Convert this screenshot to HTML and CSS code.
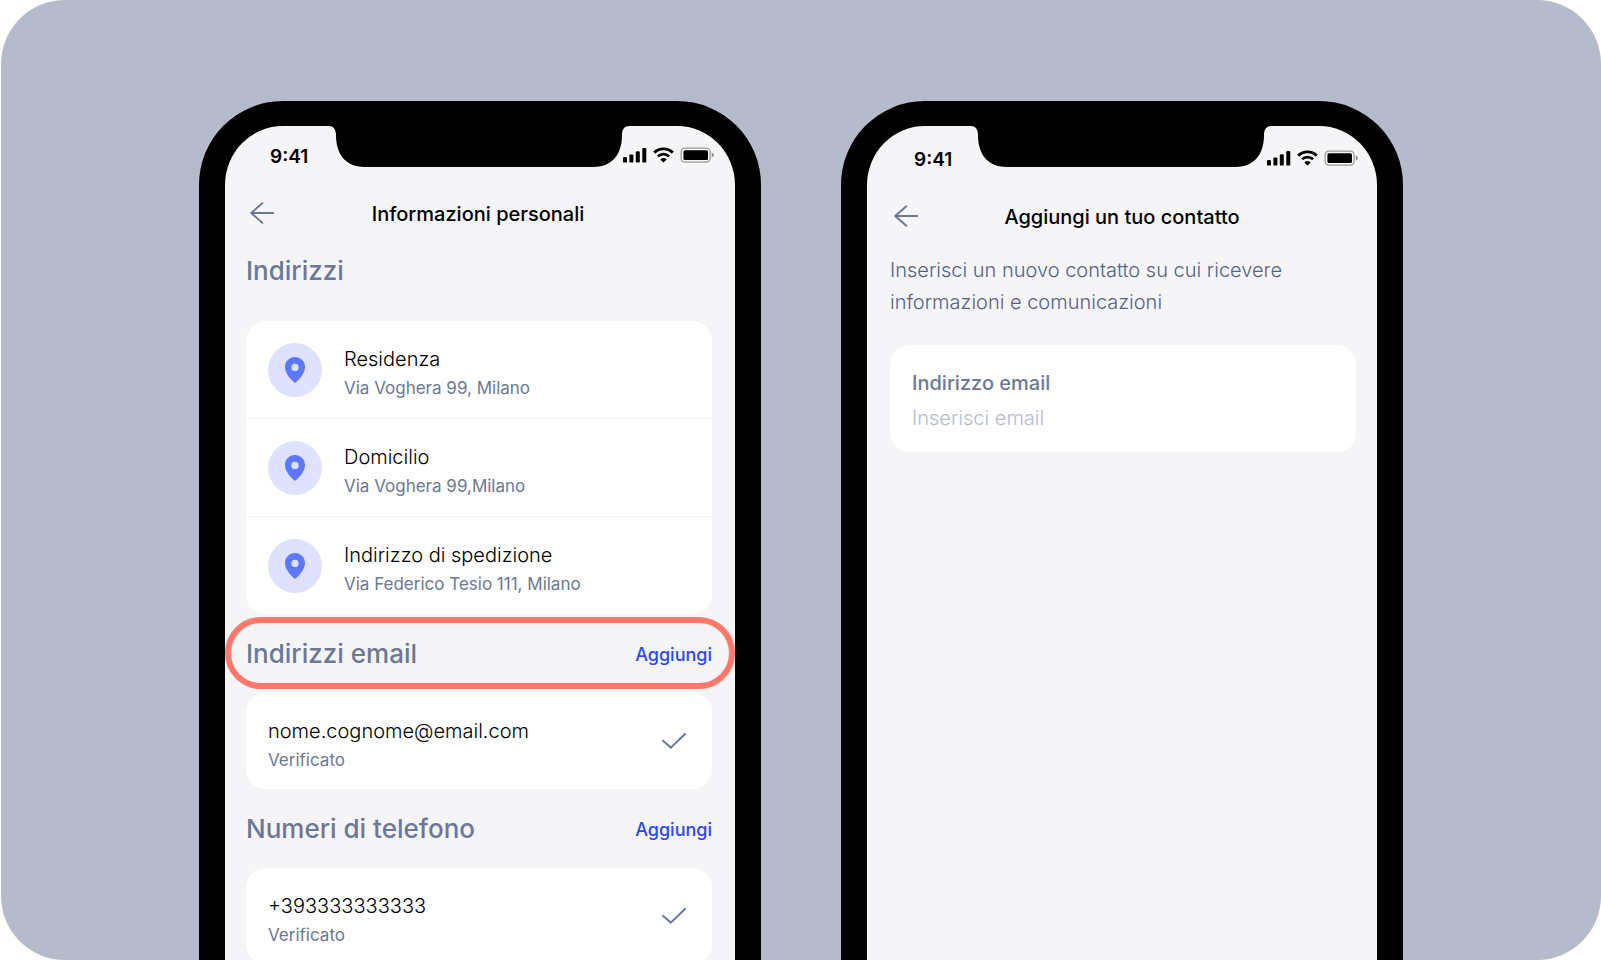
FILE: index.html
```html
<!DOCTYPE html>
<html lang="it">

<head>
    <meta charset="UTF-8">
    <meta name="viewport" content="width=device-width, initial-scale=1.0">
    <title>Informazioni personali</title>
    <link rel="stylesheet" href="styles.css">
</head>

<body>
    <!-- shared icons -->
    <svg class="sprite" aria-hidden="true">
        <symbol id="notch" viewBox="0 0 300 41">
            <path d="M0 0 C4 0 7 3 7 9 C7 25 14 41 36 41 H264 C286 41 293 25 293 9 C293 3 296 0 300 0 Z" />
        </symbol>
        <symbol id="status" viewBox="0 0 92 16">
            <rect x="0" y="10" width="4" height="5.6" rx="1.2" />
            <rect x="6.4" y="7.4" width="4" height="8.2" rx="1.2" />
            <rect x="12.8" y="4.2" width="4" height="11.4" rx="1.2" />
            <rect x="19.3" y="1" width="4" height="14.6" rx="1.2" />
            <path d="M31.2 5.6 A13.4 13.4 0 0 1 49.8 5.6" fill="none" stroke="#000" stroke-width="2.9" />
            <path d="M34.9 9.3 A8.2 8.2 0 0 1 46.1 9.3" fill="none" stroke="#000" stroke-width="2.7" />
            <path d="M37.3 12.4 Q40.5 9.8 43.7 12.4 L40.5 15.6 Z" />
            <rect x="58.1" y="1.1" width="29" height="14" rx="3.8" fill="none" stroke="#000" stroke-opacity=".38" stroke-width="1.2" />
            <rect x="60.4" y="3.2" width="24.6" height="9.8" rx="1.6" />
            <path d="M88.7 5.6 Q91 6.4 91 8.1 Q91 9.8 88.7 10.6 Z" fill-opacity=".4" />
        </symbol>
        <symbol id="back" viewBox="0 0 24 22">
            <path d="M12.3 1.2 L1.2 11 L12.3 20.8 M1.2 11 H23.2" fill="none" stroke="currentColor" stroke-width="2" stroke-linecap="round" stroke-linejoin="round" />
        </symbol>
        <symbol id="pin" viewBox="0 0 20 26">
            <path fill-rule="evenodd" d="M10 0 C4.4 0 0 4.4 0 10 C0 16.5 5.4 22 10 26 C14.6 22 20 16.5 20 10 C20 4.4 15.6 0 10 0 Z M10 6.8 A3.6 3.6 0 1 1 10 14 A3.6 3.6 0 1 1 10 6.8 Z" fill="currentColor" />
        </symbol>
        <symbol id="check" viewBox="0 0 24 16">
            <path d="M1 7.8 L8.8 14.6 L23 1" fill="none" stroke="currentColor" stroke-width="2" stroke-linecap="round" />
        </symbol>
    </svg>

    <main class="stage">
        <div class="phone phone-info">
            <svg class="notch"><use href="#notch" /></svg>
            <div class="status-bar">
                <span class="time">9:41</span>
                <svg class="status-icons"><use href="#status" /></svg>
            </div>
            <header class="topbar">
                <button class="back" type="button" aria-label="Indietro"><svg><use href="#back" /></svg></button>
                <h1>Informazioni personali</h1>
            </header>

            <section>
                <div class="section-head section-first">
                    <h2>Indirizzi</h2>
                </div>
                <ul class="card">
                    <li class="row">
                        <span class="badge"><svg><use href="#pin" /></svg></span>
                        <div class="text">
                            <p class="name">Residenza</p>
                            <p class="detail">Via Voghera 99, Milano</p>
                        </div>
                    </li>
                    <li class="row">
                        <span class="badge"><svg><use href="#pin" /></svg></span>
                        <div class="text">
                            <p class="name">Domicilio</p>
                            <p class="detail">Via Voghera 99,Milano</p>
                        </div>
                    </li>
                    <li class="row">
                        <span class="badge"><svg><use href="#pin" /></svg></span>
                        <div class="text">
                            <p class="name">Indirizzo di spedizione</p>
                            <p class="detail">Via Federico Tesio 111, Milano</p>
                        </div>
                    </li>
                </ul>
            </section>

            <section>
                <div class="section-head highlight">
                    <h2>Indirizzi email</h2>
                    <button class="add" type="button">Aggiungi</button>
                </div>
                <div class="card contact">
                    <div class="text">
                        <p class="name">nome.cognome@email.com</p>
                        <p class="detail">Verificato</p>
                    </div>
                    <svg class="check"><use href="#check" /></svg>
                </div>
            </section>

            <section>
                <div class="section-head">
                    <h2>Numeri di telefono</h2>
                    <button class="add" type="button">Aggiungi</button>
                </div>
                <div class="card contact">
                    <div class="text">
                        <p class="name">+393333333333</p>
                        <p class="detail">Verificato</p>
                    </div>
                    <svg class="check"><use href="#check" /></svg>
                </div>
            </section>
        </div>

        <div class="phone phone-add">
            <svg class="notch"><use href="#notch" /></svg>
            <div class="status-bar">
                <span class="time">9:41</span>
                <svg class="status-icons"><use href="#status" /></svg>
            </div>
            <header class="topbar">
                <button class="back" type="button" aria-label="Indietro"><svg><use href="#back" /></svg></button>
                <h1>Aggiungi un tuo contatto</h1>
            </header>
            <p class="intro">Inserisci un nuovo contatto su cui ricevere informazioni e comunicazioni</p>
            <form class="card field">
                <label for="email">Indirizzo email</label>
                <input type="email" id="email" placeholder="Inserisci email">
            </form>
        </div>
    </main>
</body>

</html>
```
FILE: styles.css
```css
* {
    margin: 0;
    padding: 0;
    box-sizing: border-box;
}

body {
    background: #fff;
    font-family: Inter, "Liberation Sans", sans-serif;
    color: #000;
}

button {
    border: none;
    background: none;
    font-family: inherit;
    cursor: pointer;
}

.sprite {
    position: absolute;
    width: 0;
    height: 0;
}

.stage {
    display: flex;
    justify-content: center;
    gap: 80px;
    height: 100vh;
    margin-left: 1px;
    padding: 101px 24px 0;
    overflow: hidden;
    border-radius: 64px;
    background: #b6bbcc;
}

.phone {
    position: relative;
    flex: 0 1 562px;
    min-height: 100%;
    border: 26px solid #000;
    border-top-width: 25px;
    border-bottom: none;
    border-radius: 84px 84px 0 0;
    background: #f5f5f7;
}

.phone-info {
    padding: 16px 23px 0 21px;
}

.phone-add {
    padding: 19px 21px 0 23px;
}

.notch {
    position: absolute;
    top: 0;
    left: 50%;
    width: 300px;
    height: 41px;
    margin-left: -151px;
}

.status-bar {
    display: flex;
    justify-content: space-between;
    height: 28px;
    margin-right: -3px;
    padding-left: 24px;
}

.time {
    font-size: 19px;
    font-weight: 600;
    line-height: 30px;
}

.status-icons {
    width: 92px;
    height: 16px;
    margin-top: 5px;
}

.topbar {
    display: grid;
    grid-template-columns: 24px 1fr 26px;
    align-items: center;
    height: 30px;
    margin: 28px 4px 0;
}

.back {
    display: flex;
    color: #6c7896;
}

.back svg {
    width: 24px;
    height: 22px;
}

h1 {
    padding-top: 2px;
    font-size: 20px;
    font-weight: 500;
    text-align: center;
}

.section-head {
    position: relative;
    display: flex;
    justify-content: space-between;
    align-items: center;
    height: 79px;
}

.section-first {
    margin: 3px 0 11px;
}

/* ring around the active section title, runs to the edges of the screen */
.highlight::after {
    content: "";
    position: absolute;
    inset: 3px -23px 4px -21px;
    border: 6px solid #ff786b;
    border-radius: 36px;
    pointer-events: none;
}

h2 {
    color: #6c7896;
    font-size: 26px;
    font-weight: 500;
}

.add {
    padding-top: 2px;
    color: #2b48f5;
    font-size: 18px;
    font-weight: 500;
}

.card {
    border-radius: 20px;
    background: #fff;
    list-style: none;
}

.row {
    display: flex;
    align-items: center;
    gap: 22px;
    min-height: 97px;
    padding: 0 22px;
}

.row + .row {
    min-height: 98px;
    border-top: 1px solid #f3f3f5;
}

.badge {
    display: flex;
    justify-content: center;
    align-items: center;
    width: 54px;
    height: 54px;
    border-radius: 50%;
    background: #dee2ff;
    color: #5b78ff;
}

.badge svg {
    width: 20px;
    height: 26px;
}

.text {
    padding-top: 11px;
}

.name {
    font-size: 20px;
    font-weight: 300;
    line-height: 22px;
}

.detail {
    padding-top: 4px;
    color: #6c7896;
    font-size: 17px;
    font-weight: 400;
    line-height: 28px;
}

.contact {
    display: flex;
    justify-content: space-between;
    align-items: center;
    min-height: 96px;
    padding: 0 26px 0 22px;
}

.check {
    width: 24px;
    height: 16px;
    color: #6c7896;
}

.intro {
    margin-top: 23px;
    color: #56628a;
    font-size: 20px;
    font-weight: 300;
    line-height: 32px;
}

.field {
    display: flex;
    flex-direction: column;
    gap: 3px;
    margin-top: 27px;
    padding: 22px 22px 18px;
}

.field label {
    color: #6c7896;
    font-size: 20px;
    font-weight: 500;
    line-height: 32px;
}

.field input {
    height: 32px;
    border: none;
    outline: none;
    background: none;
    font-family: inherit;
    font-size: 20px;
    font-weight: 300;
}

.field input::placeholder {
    color: #b6bbcc;
}
```
